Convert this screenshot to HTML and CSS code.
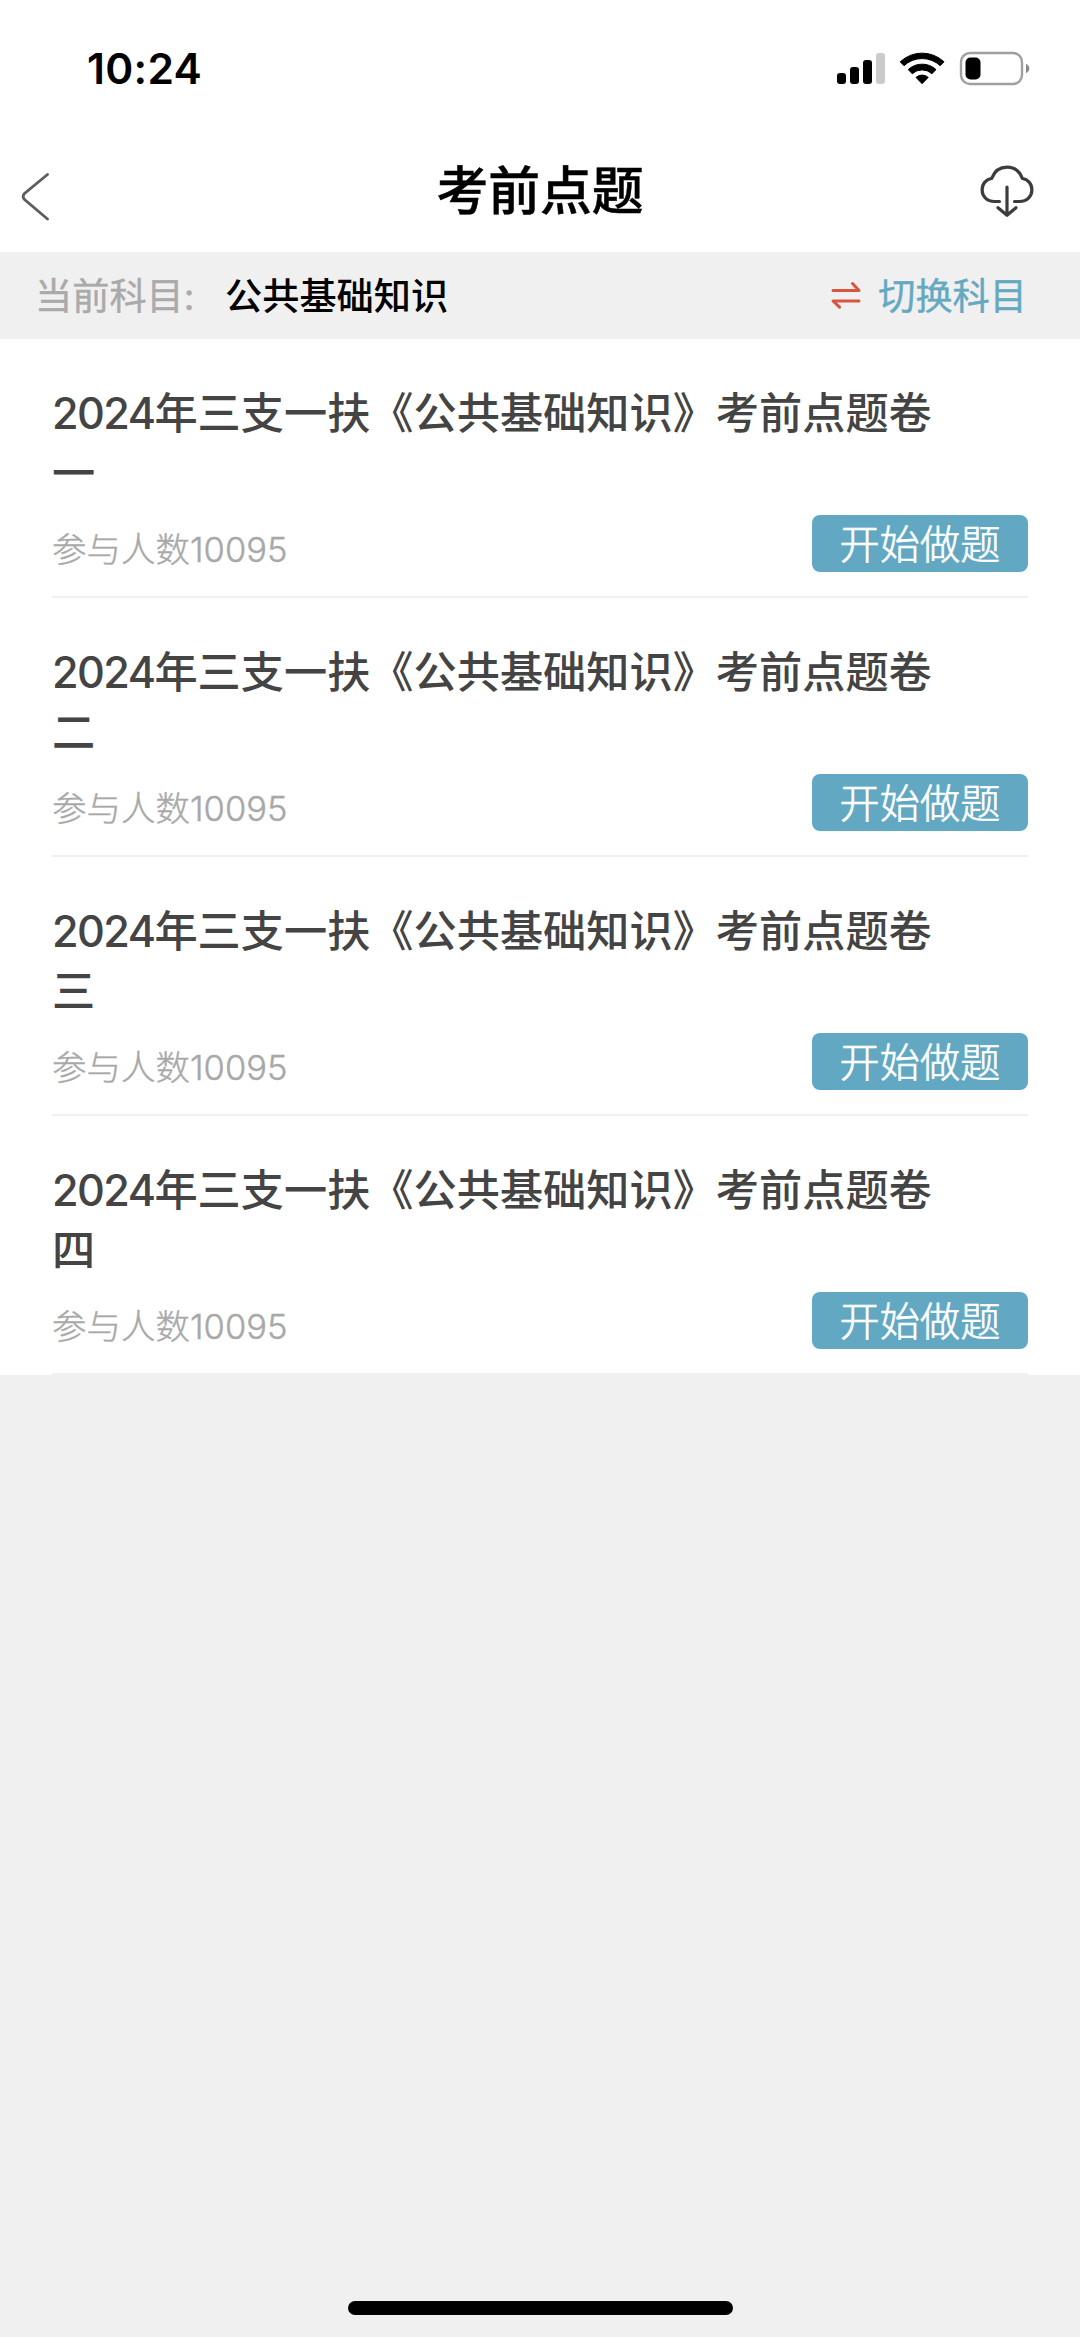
FILE: index.html
```html
<!DOCTYPE html>
<html lang="zh-CN">
<head>
<meta charset="utf-8">
<title>考前点题</title>
<link rel="stylesheet" href="styles.css">
</head>
<body>
<div class="status">
  <span class="time">10:24</span>
  <svg class="status-icons" width="196" height="36" viewBox="0 0 196 36">
    <rect x="1" y="22" width="9" height="11" rx="3"/>
    <rect x="14" y="16" width="9" height="17" rx="3"/>
    <rect x="27" y="9" width="9" height="24" rx="3"/>
    <rect x="40" y="2" width="9" height="31" rx="3" fill="#cbcbcb"/>
    <path d="M64.200 10.800A32 32 0 0 1 108 10.800L104.200 14.700A26.500 26.500 0 0 0 68 14.700ZM72.200 18.600A20.500 20.500 0 0 1 100 18.600L95.900 22.700A14.500 14.500 0 0 0 76.300 22.700ZM80 26.400A9.200 9.200 0 0 1 92.200 26.400L86.100 32.700Z" stroke="#000" stroke-width="1" stroke-linejoin="round"/>
    <rect x="125" y="2" width="61" height="31" rx="9" fill="none" stroke="#a0a0a0" stroke-width="2.400"/>
    <rect x="129.500" y="6.500" width="15" height="22" rx="5"/>
    <path d="M190 12.800Q193.300 14.400 193.300 17.500T190 22.200Z" fill="#8a8a8a"/>
  </svg>
</div>
<header class="nav">
  <svg class="back" width="30" height="50" viewBox="0 0 30 50"><path d="M27.500 2.500L4.500 21.500Q1.800 24.500 4.500 27.500L27.500 47" fill="none" stroke="#5c5c5c" stroke-width="2.800" stroke-linecap="round"/></svg>
  <h1 class="title">考前点题</h1>
  <svg class="download" width="54" height="52" viewBox="0 0 54 52" fill="none" stroke="#3c3c3e" stroke-width="3.200" stroke-linecap="round" stroke-linejoin="round">
    <path d="M19.500 36.500H14.500C7 36.500 2.100 31.500 2.100 24.800C2.100 18.700 6.200 14.200 11.700 13.300C14.400 6.500 20 2.200 27 2.200S39.600 6.500 42.300 13.300C47.800 14.200 51.900 18.700 51.900 24.800C51.900 31.500 47 36.500 39.500 36.500H34.500"/>
    <path d="M27 22V50M18 42.800L27 50.300L36 42.800"/>
  </svg>
</header>
<section class="subject">
  <span class="label">当前科目<span class="colon">:</span></span>
  <span class="name">公共基础知识</span>
  <span class="switch">
    <svg width="30" height="28" viewBox="0 0 30 28" fill="none" stroke="#d6573f" stroke-width="3" stroke-linecap="round" stroke-linejoin="round"><path d="M2 9.500H28L21.500 2.500M28 20H2L8.500 26.200"/></svg>
    <span>切换科目</span>
  </span>
</section>
<main class="list">
  <article class="item">
    <h2 class="paper"><span class="year">2024</span>年三支一扶《公共基础知识》考前点题卷一</h2>
    <div class="foot"><span class="count">参与人数<span class="num">10095</span></span><span class="start">开始做题</span></div>
  </article>
  <article class="item">
    <h2 class="paper"><span class="year">2024</span>年三支一扶《公共基础知识》考前点题卷二</h2>
    <div class="foot"><span class="count">参与人数<span class="num">10095</span></span><span class="start">开始做题</span></div>
  </article>
  <article class="item">
    <h2 class="paper"><span class="year">2024</span>年三支一扶《公共基础知识》考前点题卷三</h2>
    <div class="foot"><span class="count">参与人数<span class="num">10095</span></span><span class="start">开始做题</span></div>
  </article>
  <article class="item">
    <h2 class="paper"><span class="year">2024</span>年三支一扶《公共基础知识》考前点题卷四</h2>
    <div class="foot"><span class="count">参与人数<span class="num">10095</span></span><span class="start">开始做题</span></div>
  </article>
</main>
<div class="home"></div>
</body>
</html>
```
FILE: styles.css
```css
* { box-sizing: border-box; }
body {
  margin: 0;
  height: 2337px;
  display: flex;
  flex-direction: column;
  background: #f0f0f0;
  font-family: "Noto Sans CJK SC", sans-serif;
  overflow: hidden;
}
h1, h2 { margin: 0; }
svg { display: block; flex: none; }
.status {
  height: 136px;
  padding: 51px 48px 0 87px;
  display: flex;
  justify-content: space-between;
  align-items: flex-start;
  background: #fff;
}
.time {
  font: 600 42.500px/36px Inter, sans-serif;
  letter-spacing: 0.3px;
}
.nav {
  height: 116px;
  padding: 0 46px 0 20px;
  display: grid;
  grid-template-columns: 160px 1fr 134px;
  background: #fff;
}
.back { margin-top: 36px; }
.title {
  text-align: center;
  font-size: 51.800px;
  line-height: 103px;
  font-weight: 500;
  color: #000;
  -webkit-text-stroke: 0.5px #000;
}
.download { justify-self: end; margin-top: 29px; }
.subject {
  height: 87px;
  padding: 0 53px 0 35px;
  display: flex;
  align-items: center;
  font-size: 37.200px;
  line-height: 85px;
}
.subject > span { margin-top: -2px; }
.label { width: 190px; color: #aaa; -webkit-text-stroke: 0.4px #aaa; }
.colon { font-family: Inter, sans-serif; line-height: 0; }
.name { color: #000; font-weight: 500; }
.switch {
  margin-left: auto;
  display: flex;
  align-items: center;
  gap: 17px;
  color: #65a9c1;
  -webkit-text-stroke: 0.4px #65a9c1;
}
.list { background: #fff; padding-left: 52px; padding-right: 52px; }
.item {
  height: 259px;
  padding-top: 41px;
  border-bottom: 2px solid #f0f0f0;
  display: flex;
  flex-direction: column;
}
.paper {
  width: 900px;
  font-size: 43.200px;
  line-height: 60px;
  font-weight: 500;
  color: #444;
}
.year { font-family: Inter, sans-serif; letter-spacing: -1.600px; line-height: 0; }
.foot {
  margin-top: 15px;
  height: 57px;
  display: flex;
  justify-content: space-between;
}
.count {
  font-size: 34.500px;
  line-height: 65px;
  font-weight: 300;
  color: #a8a8a8;
  -webkit-text-stroke: 0.4px #a8a8a8;
}
.num { font-family: Inter, sans-serif; line-height: 0; }
.start {
  width: 216px;
  height: 57px;
  border-radius: 8px;
  background: #62a8c2;
  color: #fff;
  font-size: 40.200px;
  line-height: 53px;
  font-weight: 300;
  text-align: center;
  -webkit-text-stroke: 0.6px #fff;
}
.home {
  width: 385px;
  height: 14px;
  margin: auto auto 22px 348px;
  border-radius: 7px;
  background: #000;
}
```
